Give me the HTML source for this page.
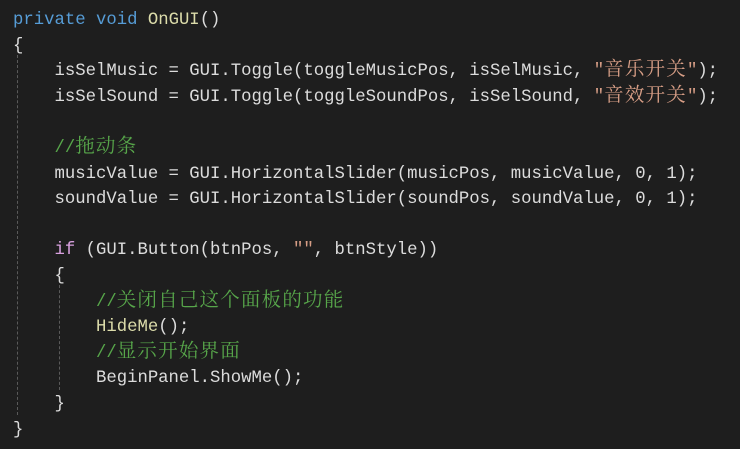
<!DOCTYPE html>
<html><head><meta charset="utf-8"><style>
html,body{margin:0;padding:0;background:#1e1e1e;width:740px;height:449px;overflow:hidden}
#code{position:absolute;left:13px;top:8px;font-family:"Liberation Mono","Noto Sans CJK SC",monospace;font-size:17.3px;color:#dcdcdc}
#code div{height:25.6px;line-height:25.6px;white-space:pre;overflow:visible}
.k{color:#569cd6}.m{color:#dcdcaa}.s{color:#d69d85}.c{color:#57a64a}.p{color:#d8a0df}
.z{letter-spacing:1.2px;font-size:19.5px;line-height:0;font-family:"Noto Serif CJK SC","Noto Sans CJK SC",serif}
.g{position:absolute;width:0;border-left:1px dashed #5a5a5a}
</style></head><body>
<div class="g" style="left:17px;top:55px;height:360px"></div>
<div class="g" style="left:59px;top:285px;height:105px"></div>
<div id="code">
<div><span class="k">private</span> <span class="k">void</span> <span class="m">OnGUI</span>()</div>
<div>{</div>
<div>    isSelMusic = GUI.Toggle(toggleMusicPos, isSelMusic, <span class="s">"<span class="z">音乐开关</span>"</span>);</div>
<div>    isSelSound = GUI.Toggle(toggleSoundPos, isSelSound, <span class="s">"<span class="z">音效开关</span>"</span>);</div>
<div> </div>
<div>    <span class="c">//<span class="z">拖动条</span></span></div>
<div>    musicValue = GUI.HorizontalSlider(musicPos, musicValue, 0, 1);</div>
<div>    soundValue = GUI.HorizontalSlider(soundPos, soundValue, 0, 1);</div>
<div> </div>
<div>    <span class="p">if</span> (GUI.Button(btnPos, <span class="s">""</span>, btnStyle))</div>
<div>    {</div>
<div>        <span class="c">//<span class="z">关闭自己这个面板的功能</span></span></div>
<div>        <span class="m">HideMe</span>();</div>
<div>        <span class="c">//<span class="z">显示开始界面</span></span></div>
<div>        BeginPanel.ShowMe();</div>
<div>    }</div>
<div>}</div>
</div>
</body></html>
